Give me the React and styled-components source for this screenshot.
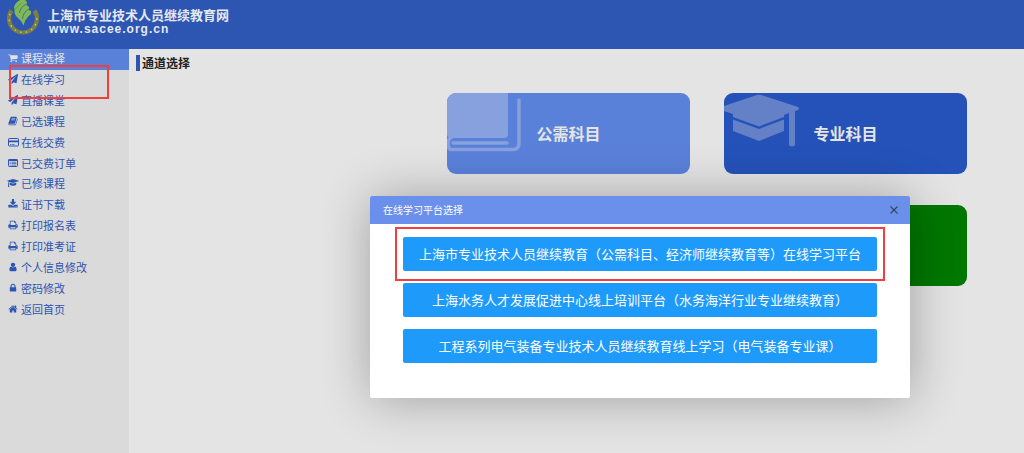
import React from 'react';
import styled, { createGlobalStyle } from 'styled-components';

const GlobalStyle = createGlobalStyle`
    * {
        box-sizing: border-box;
    }
    body {
        margin: 0;
        background: #e4e4e4;
        font-family: 'Noto Sans CJK SC', sans-serif;
    }
    button {
        font-family: inherit;
        border: none;
        padding: 0;
        cursor: pointer;
    }
`;

const paths = {
    cart: 'M704 1536q0 52-38 90t-90 38-90-38-38-90 38-90 90-38 90 38 38 90zm896 0q0 52-38 90t-90 38-90-38-38-90 38-90 90-38 90 38 38 90zm128-1088v512q0 24-16.5 42.500t-40.500 21.500l-1044 122q13 60 13 70 0 16-24 64h920q26 0 45 19t19 45-19 45-45 19h-1024q-26 0-45-19t-19-45q0-11 8-31.500t16-36 21.500-40 15.500-29.500l-177-823h-204q-26 0-45-19t-19-45 19-45 45-19h256q16 0 28.500 6.500t19.500 15.500 13 24.500 8 26 5.500 29.500 4.500 26h1201q26 0 45 19t19 45z',
    plane: 'M1764 11q33 24 27 64l-256 1536q-5 29-32 45-14 8-31 8-11 0-24-5l-453-185-242 295q-18 23-49 23-13 0-22-4-19-7-30.500-23.500t-11.500-36.500v-349l864-1059-1069 925-395-162q-37-14-40-55-2-40 32-59l1664-960q15-9 32-9 20 0 36 11z',
    book: 'M1703 478q40 57 18 129l-275 906q-19 64-76.500 107.500t-122.500 43.500h-923q-77 0-148.500-53.500t-99.500-131.500q-24-67-2-127 0-4 3-27t4-37q1-8-3-21.500t-3-19.500q2-11 8-21t16.500-23.500 16.500-23.500q23-38 45-91.500t30-91.500q3-10 .5-30t-.5-28q3-11 17-28t17-23q21-36 42-92t25-90q1-9-2.500-32t.5-28q4-13 22-30.500t22-22.500q19-26 42.500-84.500t27.500-96.500q1-8-3-25.500t-2-26.500q2-8 9-18t18-23 17-21q8-12 16.500-30.500t15-35 16-36 19.500-32 26.500-23.500 36-11.500 47.500 5.500l-1 3q38-9 51-9h761q74 0 114 56t18 130l-274 906q-36 119-71.500 153.500t-128.500 34.500h-869q-27 0-38 15-11 16-1 43 24 70 144 70h923q29 0 56-15.500t35-41.500l300-987q7-22 5-57 38 15 59 43zm-1064 2q-4 13 2 22.500t20 9.500h608q13 0 25.500-9.500t16.500-22.500l21-64q4-13-2-22.500t-20-9.500h-608q-13 0-25.500 9.500t-16.500 22.500zm-83 256q-4 13 2 22.500t20 9.500h608q13 0 25.500-9.500t16.500-22.500l21-64q4-13-2-22.500t-20-9.500h-608q-13 0-25.500 9.500t-16.500 22.500z',
    cap: 'M1774 700l18 316q4 69-82 128t-235 93.500-323 34.500-323-34.500-235-93.500-82-128l18-316 574 181q22 7 48 7t48-7zm530-324q0 23-22 31l-1120 352q-4 1-10 1t-10-1l-652-206q-43 34-71 111.500t-34 178.500q63 36 63 109 0 69-58 107l58 433q2 14-8 25-9 11-24 11h-192q-15 0-24-11-10-11-8-25l58-433q-58-38-58-107 0-73 65-111 11-207 98-330l-333-104q-22-8-22-31t22-31l1120-352q4-1 10-1t10 1l1120 352q22 8 22 31z',
    download: 'M1344 1344q0-26-19-45t-45-19-45 19-19 45 19 45 45 19 45-19 19-45zm256 0q0-26-19-45t-45-19-45 19-19 45 19 45 45 19 45-19 19-45zm128-224v320q0 40-28 68t-68 28h-1472q-40 0-68-28t-28-68v-320q0-40 28-68t68-28h465l135 136q58 56 136 56t136-56l136-136h464q40 0 68 28t28 68zm-325-569q17 41-14 70l-448 448q-18 19-45 19t-45-19l-448-448q-31-29-14-70 17-39 59-39h256v-448q0-26 19-45t45-19h256q26 0 45 19t19 45v448h256q42 0 59 39z',
    print: 'M448 1536h896v-256h-896v256zm0-640h896v-384h-160q-40 0-68-28t-28-68v-160h-640v640zm1152 64q0-26-19-45t-45-19-45 19-19 45 19 45 45 19 45-19 19-45zm128 0v416q0 13-9.500 22.500t-22.500 9.500h-224v160q0 40-28 68t-68 28h-960q-40 0-68-28t-28-68v-160h-224q-13 0-22.500-9.500t-9.500-22.500v-416q0-79 56.500-135.500t135.500-56.500h64v-544q0-40 28-68t68-28h672q40 0 88 20t76 48l152 152q28 28 48 76t20 88v256h64q79 0 135.500 56.500t56.500 135.500z',
    user: 'M1536 1399q0 109-62.500 187t-150.500 78h-854q-88 0-150.500-78t-62.500-187q0-85 8.500-160.500t31.500-152 58.500-131 94-89 134.500-34.500q131 128 313 128t313-128q76 0 134.500 34.500t94 89 58.500 131 31.500 152 8.500 160.500zm-256-887q0 159-112.500 271.500t-271.500 112.500-271.500-112.500-112.500-271.500 112.500-271.500 271.500-112.500 271.500 112.500 112.500 271.500z',
    lock: 'M640 768h512v-192q0-106-75-181t-181-75-181 75-75 181v192zm832 96v576q0 40-28 68t-68 28h-960q-40 0-68-28t-28-68v-576q0-40 28-68t68-28h32v-192q0-184 132-316t316-132 316 132 132 316v192h32q40 0 68 28t28 68z',
    home: 'M1472 992v480q0 26-19 45t-45 19h-384v-384h-256v384h-384q-26 0-45-19t-19-45v-480q0-1 .5-3t.5-3l575-474 575 474q1 2 1 6zm223-69l-62 74q-8 9-21 11h-3q-13 0-21-7l-692-577-692 577q-12 8-24 7-13-2-21-11l-62-74q-8-10-7-23.500t11-21.500l719-599q32-26 76-26t76 26l244 204v-195q0-14 9-23t23-9h192q14 0 23 9t9 23v408l219 182q10 8 11 21.500t-7 23.500z',
};

const Glyph = ({ name }) => (
    <svg
        viewBox={name === 'cap' ? '0 -128 2304 1792' : '0 0 1792 1792'}
        width={name === 'cap' ? 12 : 10}
        height="10"
        fill="currentColor"
        aria-hidden="true"
    >
        <path d={paths[name]} />
    </svg>
);

const CreditCard = () => (
    <svg width="11" height="10" viewBox="0 0 11 10" fill="currentColor" aria-hidden="true">
        <rect x="0.500" y="1.500" width="10" height="7.500" rx="0.800" fill="none" stroke="currentColor" />
        <path d="M0.500 3.500H10.500V5.200H0.500ZM2 7H3.500V7.800H2ZM4.200 7H6.500V7.800H4.200Z" />
    </svg>
);

const ListAlt = () => (
    <svg width="10" height="10" viewBox="0 0 10 10" fill="currentColor" aria-hidden="true">
        <rect x="0.500" y="1.500" width="9" height="7" rx="0.800" fill="none" stroke="currentColor" />
        <path d="M0.500 1.500H9.500V3H0.500ZM1.800 3.700H2.800V4.500H1.800ZM3.500 3.700H8.300V4.500H3.500ZM1.800 5.200H2.800V6H1.800ZM3.500 5.200H8.300V6H3.500ZM1.800 6.700H2.800V7.500H1.800ZM3.500 6.700H8.300V7.500H3.500Z" />
    </svg>
);

const menu = [
    { text: '课程选择', icon: <Glyph name="cart" />, active: true },
    { text: '在线学习', icon: <Glyph name="plane" />, marked: true },
    { text: '直播课堂', icon: <Glyph name="plane" /> },
    { text: '已选课程', icon: <Glyph name="book" /> },
    { text: '在线交费', icon: <CreditCard /> },
    { text: '已交费订单', icon: <ListAlt /> },
    { text: '已修课程', icon: <Glyph name="cap" /> },
    { text: '证书下载', icon: <Glyph name="download" /> },
    { text: '打印报名表', icon: <Glyph name="print" /> },
    { text: '打印准考证', icon: <Glyph name="print" /> },
    { text: '个人信息修改', icon: <Glyph name="user" /> },
    { text: '密码修改', icon: <Glyph name="lock" /> },
    { text: '返回首页', icon: <Glyph name="home" /> },
];

const platforms = [
    '上海市专业技术人员继续教育（公需科目、经济师继续教育等）在线学习平台',
    '上海水务人才发展促进中心线上培训平台（水务海洋行业专业继续教育）',
    '工程系列电气装备专业技术人员继续教育线上学习（电气装备专业课）',
];

const Page = styled.div`
    min-height: 100vh;
    display: flex;
    flex-direction: column;
`;

const Header = styled.header`
    height: 49px;
    flex: none;
    display: flex;
    align-items: flex-start;
    gap: 6px;
    padding-left: 5px;
    background: #2d55b2;
`;

const Brand = styled.div`
    display: flex;
    flex-direction: column;
    padding-top: 7px;
    color: #e4e8f0;

    strong {
        font-size: 13px;
        line-height: 16px;
    }
    span {
        padding-left: 2px;
        font: bold 12px/13px 'Liberation Sans', sans-serif;
        letter-spacing: 1px;
    }
`;

const Columns = styled.div`
    flex: 1;
    display: flex;
`;

const Sidebar = styled.nav`
    width: 129px;
    flex: none;
    background: #dadada;
`;

const Menu = styled.ul`
    height: 271px;
    margin: 0;
    padding: 0;
    list-style: none;
    display: grid;
    grid-auto-rows: 1fr;
`;

const MenuItem = styled.li`
    position: relative;
    display: flex;
`;

const MenuLink = styled.a`
    flex: 1;
    display: flex;
    align-items: center;
    gap: 2px;
    padding: 0 0 2px 7px;
    font-size: 11px;
    line-height: 16px;
    text-decoration: none;
    color: ${(p) => (p.$active ? '#e4e4e4' : '#2d55b2')};
    background: ${(p) => (p.$active ? '#5a81da' : 'transparent')};
`;

const IconBox = styled.span`
    width: 12px;
    flex: none;
    display: flex;
    justify-content: center;
`;

/* red frame drawn over the item it points at */
const Mark = styled.span`
    position: absolute;
    inset: ${(p) => p.$inset};
    border: 2px solid #f43e3e;
    pointer-events: none;
    z-index: 1;
`;

const Main = styled.main`
    flex: 1;
    display: flex;
    flex-direction: column;
    gap: 22px;
    padding: 6px 57px 0 7px;
`;

const Title = styled.h1`
    margin: 0;
    padding-left: 2px;
    border-left: 4px solid #2d55b2;
    font-size: 12px;
    line-height: 16px;
    color: #222;
`;

const Cards = styled.div`
    display: grid;
    grid-template-columns: repeat(2, 243px);
    justify-content: end;
    gap: 31px 34px;
`;

const Card = styled.button`
    position: relative;
    height: 81px;
    grid-column: ${(p) => p.$column};
    padding-bottom: 2px;
    border-radius: 9px;
    overflow: hidden;
    background: ${(p) => p.$color};
    color: #e4e4e4;
    font-size: 16px;
    font-weight: bold;

    svg {
        position: absolute;
        top: 0;
        left: 0;
    }
`;

const Dialog = styled.section`
    position: absolute;
    top: 196px;
    left: 370px;
    width: 540px;
    border-radius: 2px;
    background: #fff;
    box-shadow: 1px 1px 50px rgba(0, 0, 0, 0.3);
`;

const DialogHeader = styled.div`
    height: 28px;
    display: flex;
    align-items: center;
    justify-content: space-between;
    padding: 0 11px 0 13px;
    border-radius: 2px 2px 0 0;
    background: #6b90eb;

    h2 {
        margin: 0;
        font-size: 10px;
        line-height: 14px;
        font-weight: 400;
        color: #fff;
    }
`;

const Close = styled.button`
    display: flex;
    background: none;
    color: #3b4660;
`;

const DialogBody = styled.div`
    display: flex;
    flex-direction: column;
    gap: 12px;
    padding: 13px 33px 35px;
`;

const Option = styled.div`
    position: relative;
    display: flex;
`;

const PlatformButton = styled.button`
    flex: 1;
    height: 34px;
    padding-bottom: 2px;
    border-radius: 2px;
    background: #1e9afa;
    color: #fff;
    font-size: 13px;
    white-space: nowrap;
`;

const Logo = () => (
    <svg width="36" height="37" viewBox="5 0 36 37" aria-hidden="true">
        <path d="M11.500 10.500A14 14 0 1 0 34.500 10.500" fill="none" stroke="#7c7f3e" strokeWidth="4.200" />
        <path d="M10 14A13.800 13.800 0 1 0 36 14" fill="none" stroke="#cfcf9c" strokeWidth="1.300" strokeDasharray="1.400 4.400" />
        <path d="M20 0H25L27 2L26.500 5L29 7V10L31 11V14Q27 17 25 21L23.500 25.500Q21 20 17 17Q14 14 14.500 10L14 7Q15 3 20 0Z" fill="#7fb955" />
        <path d="M26.500 4Q20 7 19.500 13M29 9Q23 12 22.500 19" fill="none" stroke="#3d6aa0" strokeWidth="0.900" />
        <path d="M14.500 10Q18 5 22 3" fill="none" stroke="#5a9070" strokeWidth="0.700" />
    </svg>
);

const BookArt = () => (
    <svg width="80" height="64" fill="#87a0de" aria-hidden="true">
        <path d="M0 0H61V41Q61 45 57 45H4Q0 45 0 41Z" />
        <path d="M6 50H60M72 7V50Q72 56.500 66 56.500H5Q1 56.500 1 50Q1 46 5 44" fill="none" stroke="#87a0de" strokeWidth="3.500" strokeLinecap="round" />
    </svg>
);

const CapArt = () => (
    <svg width="80" height="60" fill="#6481c8" aria-hidden="true">
        <path d="M0 13L33 2Q35 1.500 37 2L74 14Q76 15.500 74 17L71 18V51Q71 53.500 68 53.500T65 51V20L60 22V24L35 33.500L9 24V21L0 18Z" />
        <path d="M9 26.500L35 36L60 26.500V38L35 48L9 38Z" />
    </svg>
);

const App = () => {
    return (
        <Page>
            <GlobalStyle />
            <Header>
                <Logo />
                <Brand>
                    <strong>上海市专业技术人员继续教育网</strong>
                    <span>www.sacee.org.cn</span>
                </Brand>
            </Header>
            <Columns>
                <Sidebar>
                    <Menu>
                        {menu.map((item) => (
                            <MenuItem key={item.text}>
                                <MenuLink href="#" $active={item.active}>
                                    <IconBox>{item.icon}</IconBox>
                                    {item.text}
                                </MenuLink>
                                {item.marked && <Mark $inset="-5px 20px -8px 9px" />}
                            </MenuItem>
                        ))}
                    </Menu>
                </Sidebar>
                <Main>
                    <Title>通道选择</Title>
                    <Cards>
                        <Card $color="#5a81da">
                            <BookArt />
                            公需科目
                        </Card>
                        <Card $color="#2552b8">
                            <CapArt />
                            专业科目
                        </Card>
                        <Card $color="#007800" $column="2" aria-label="其他" />
                    </Cards>
                </Main>
            </Columns>
            <Dialog role="dialog" aria-labelledby="dialog-title">
                <DialogHeader>
                    <h2 id="dialog-title">在线学习平台选择</h2>
                    <Close aria-label="关闭">
                        <svg width="10" height="10" stroke="currentColor" strokeWidth="1.200" aria-hidden="true">
                            <path d="M1.500 1.500L8.500 8.500M8.500 1.500L1.500 8.500" />
                        </svg>
                    </Close>
                </DialogHeader>
                <DialogBody>
                    {platforms.map((name, i) => (
                        <Option key={name}>
                            <PlatformButton>{name}</PlatformButton>
                            {i === 0 && <Mark $inset="-10px -8px" />}
                        </Option>
                    ))}
                </DialogBody>
            </Dialog>
        </Page>
    );
};

export default App;
